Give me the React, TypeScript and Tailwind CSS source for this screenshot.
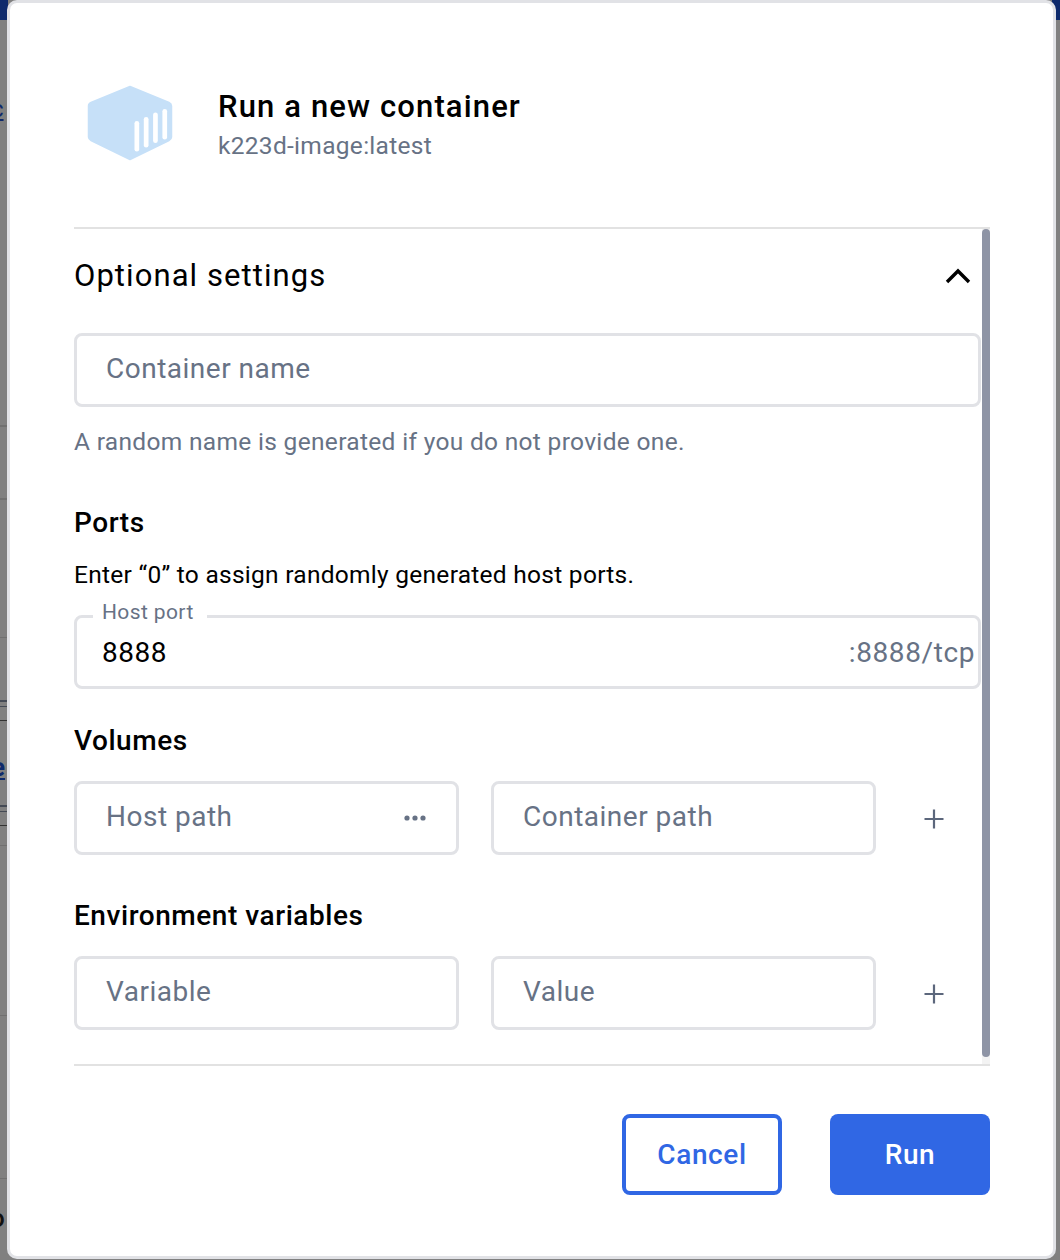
import React from "react";

const inputCls =
  "h-[74px] rounded-[8px] border-[3px] border-[#e1e2e6] bg-white px-[29px] pb-[2px] flex items-center text-[28px] tracking-[0.5px] text-[#677285]";
const headingCls = "text-[28px] leading-[34px] font-medium tracking-[0.55px] text-black";
const bodyCls = "text-[24.5px] leading-[34px]";

function PlusIcon() {
  return (
    <div className="w-[73px] h-[74px] shrink-0 flex items-center pl-[16px]">
      <svg width="20" height="20" viewBox="0 0 20 20" className="mt-[1px]">
        <path d="M10 0.5V19.5M0.5 10H19.5" stroke="#5c677c" strokeWidth="2.2" />
      </svg>
    </div>
  );
}

function BackdropStrip() {
  return (
    <div className="flex h-[1260px] justify-between bg-[#808080]">
      <div className="flex w-[8px] flex-col overflow-hidden">
        <div className="h-[20px] shrink-0 bg-[#0e2a6c]" />
        <span className="mt-[74px] -ml-[9px] h-[30px] shrink-0 text-[24px] leading-[30px] underline text-[#0e2a6c]">c</span>
        <div className="mt-[301px] h-[2px] shrink-0 bg-[#707070]" />
        <div className="mt-[71px] h-[2px] shrink-0 bg-[#707070]" />
        <div className="mt-[137px] h-[1px] shrink-0 bg-[#707070]" />
        <div className="mt-[62px] h-[2px] shrink-0 bg-[#444a55]" />
        <div className="mt-[4px] h-[1px] shrink-0 bg-[#444a55]" />
        <div className="mt-[13px] h-[1px] shrink-0 bg-[#333333]" />
        <span className="mt-[31px] -ml-[9px] h-[30px] shrink-0 text-[26px] leading-[30px] font-bold underline text-[#0e2a6c]">e</span>
        <div className="mt-[23px] h-[2px] shrink-0 bg-[#444a55]" />
        <div className="mt-[4px] h-[1px] shrink-0 bg-[#444a55]" />
        <div className="mt-[13px] h-[1px] shrink-0 bg-[#333333]" />
        <div className="mt-[19px] h-[1px] shrink-0 bg-[#707070]" />
        <div className="mt-[169px] h-[1px] shrink-0 bg-[#707070]" />
        <div className="mt-[162px] h-[1px] shrink-0 bg-[#707070]" />
        <span className="mt-[24px] -ml-[10px] h-[30px] shrink-0 text-[26px] leading-[30px] font-medium text-[#111111]">o</span>
      </div>
      <div className="w-[8px]">
        <div className="h-[20px] bg-[#0e2a6c]" />
      </div>
    </div>
  );
}

export default function App() {
  return (
    <div
      className="relative w-[1060px] h-[1260px] overflow-hidden"
      style={{ fontFamily: "Roboto, 'Liberation Sans', sans-serif" }}
    >
      <BackdropStrip />
      <div className="absolute left-[7px] top-0 w-[1049px] h-[1259px] rounded-[10px] border-[3px] border-[#e1e2e6] bg-white pl-[64px] pr-[63px] flex flex-col">
        <div className="flex items-center h-[224px] shrink-0">
          <svg width="88" height="78" viewBox="0 0 88 78" className="ml-[12px] mt-[15px] shrink-0">
            <path
              d="M44 2.5L83 18.5Q85.5 19.6 85.5 22V53Q85.5 55.4 83 56.5L44 75.5L5 56.5Q2.5 55.4 2.5 53V22Q2.5 19.6 5 18.5Z"
              fill="#c6e0f8"
              stroke="#c6e0f8"
              strokeWidth="1.5"
              strokeLinejoin="round"
            />
            <rect x="48.5" y="37" width="4.7" height="30.5" rx="2.35" fill="#fff" />
            <rect x="57.8" y="33" width="4.7" height="30.5" rx="2.35" fill="#fff" />
            <rect x="67.1" y="28.5" width="4.7" height="30.5" rx="2.35" fill="#fff" />
            <rect x="76.4" y="25" width="4.7" height="30.5" rx="2.35" fill="#fff" />
          </svg>
          <div className="ml-[44px] mt-[22px]">
            <div className="text-[31px] leading-[39px] font-medium tracking-[1.13px] text-black">Run a new container</div>
            <div className="text-[24.5px] leading-[39px] tracking-[0.3px] text-[#677285]">k223d-image:latest</div>
          </div>
        </div>

        <div className="flex h-[839px] w-[916px] shrink-0 justify-between border-y-[2px] border-[#e2e2e2]">
          <div className="w-[907px]">
            <div className="flex items-center justify-between h-[94px] pr-[10px]">
              <div className="pt-[1px] text-[31px] tracking-[1.07px] text-black">Optional settings</div>
              <svg width="26" height="16" viewBox="0 0 26 16">
                <path d="M2 14L13 3L24 14" fill="none" stroke="#000" strokeWidth="3.4" />
              </svg>
            </div>
            <div className={inputCls + " mt-[10px]"}>Container name</div>
            <div className={bodyCls + " mt-[18px] tracking-[0.32px] text-[#677285]"}>
              A random name is generated if you do not provide one.
            </div>
            <div className={headingCls + " mt-[47px]"}>Ports</div>
            <div className={bodyCls + " mt-[18px] tracking-[0.27px] text-black"}>
              Enter “0” to assign randomly generated host ports.
            </div>
            <div className="relative mt-[23px] h-[74px] rounded-[8px] border-[3px] border-[#e1e2e6] bg-white pl-[25px] pr-[3px] pt-[2px] flex items-center justify-between">
              <span className="absolute left-[16px] -top-[20px] bg-white pl-[9px] pr-[13px] text-[21px] leading-[28px] tracking-[0.39px] text-[#677285]">
                Host port
              </span>
              <span className="text-[28px] tracking-[0.55px] text-black">8888</span>
              <span className="text-[28px] tracking-[0.6px] text-[#677285]">:8888/tcp</span>
            </div>
            <div className={headingCls + " mt-[35px]"}>Volumes</div>
            <div className="mt-[23px] flex gap-[32px]">
              <div className={inputCls + " w-[385px] shrink-0 justify-between pr-[29px]"}>
                Host path
                <svg width="24" height="8" viewBox="0 0 24 8" className="mt-[2px]">
                  <circle cx="4" cy="4" r="2.6" fill="#677285" />
                  <circle cx="12" cy="4" r="2.6" fill="#677285" />
                  <circle cx="20" cy="4" r="2.6" fill="#677285" />
                </svg>
              </div>
              <div className={inputCls + " w-[385px] shrink-0"}>Container path</div>
              <PlusIcon />
            </div>
            <div className={headingCls + " mt-[44px]"}>Environment variables</div>
            <div className="mt-[23px] flex gap-[32px]">
              <div className={inputCls + " w-[385px] shrink-0"}>Variable</div>
              <div className={inputCls + " w-[385px] shrink-0"}>Value</div>
              <PlusIcon />
            </div>
          </div>
          <div className="w-[8px] bg-[#f3f3f3]">
            <div className="h-[828px] rounded-[4px] bg-[#8e94a5]" />
          </div>
        </div>

        <div className="flex justify-end gap-[48px] mt-[48px] w-[916px]">
          <button className="w-[160px] h-[81px] rounded-[8px] border-[4px] border-[#3067e4] bg-white text-[28px] font-medium tracking-[0.6px] text-[#3067e4]">
            Cancel
          </button>
          <button className="w-[160px] h-[81px] rounded-[8px] bg-[#3067e4] text-[28px] font-medium tracking-[0.6px] text-white">
            Run
          </button>
        </div>
      </div>
    </div>
  );
}
